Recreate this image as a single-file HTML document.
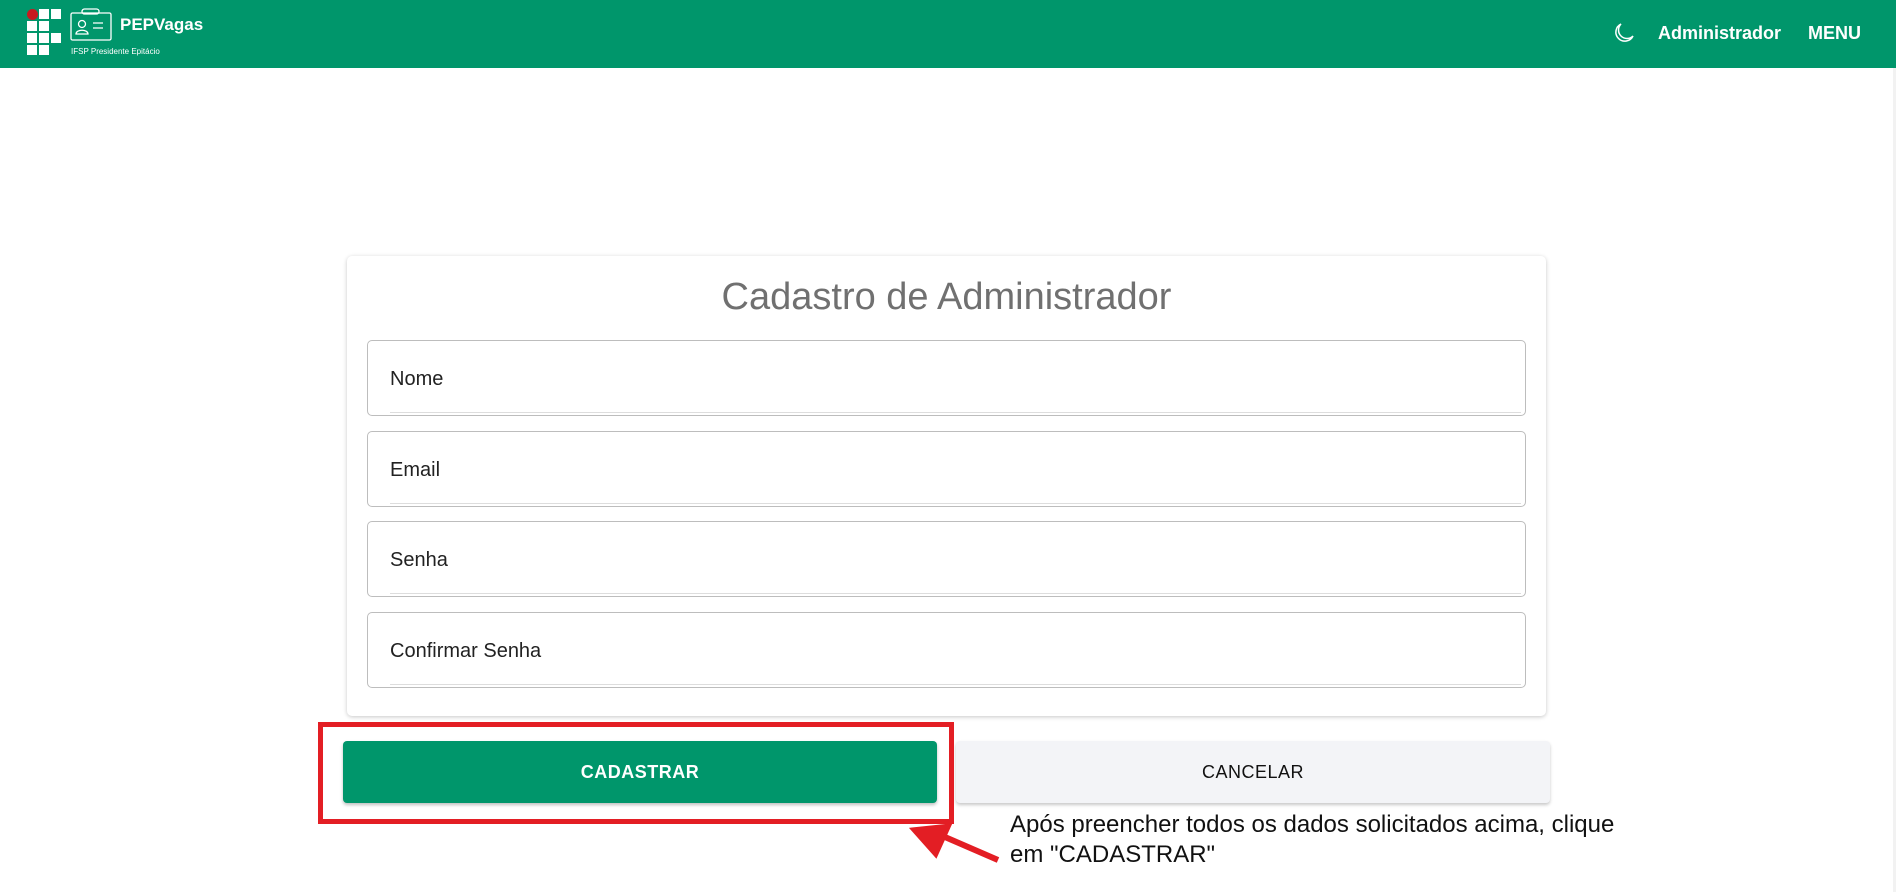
<!DOCTYPE html>
<html><head><meta charset="utf-8"><style>
*{box-sizing:border-box;margin:0;padding:0}
body{width:1896px;height:892px;background:#fff;font-family:"Liberation Sans",sans-serif;position:relative;overflow:hidden}
.hdr{position:absolute;left:0;top:0;width:1896px;height:68px;background:#00966b}
.abs{position:absolute}
.sq{position:absolute;width:10px;height:10px;background:#fff}
.card{position:absolute;left:347px;top:256px;width:1199px;height:460px;background:#fff;border-radius:5px;box-shadow:0 1px 4px rgba(0,0,0,.22)}
.inp{position:absolute;left:20px;width:1159px;height:76px;border:1px solid #bdbdbd;border-radius:5px}
.inp span{position:absolute;left:22px;top:27px;font-size:20px;color:#222}
.inp i{position:absolute;left:22px;right:4px;bottom:2px;border-bottom:1px solid #ddd}
.btn{position:absolute;top:741px;height:62px;border-radius:4px;font-size:18px;font-weight:bold;display:flex;align-items:center;justify-content:center;letter-spacing:.5px}
</style></head><body>
<div class="hdr">
 <div class="sq" style="left:27px;top:9px;border-radius:50%;background:#c8191e;width:11px;height:11px"></div>
 <div class="sq" style="left:39px;top:9px"></div><div class="sq" style="left:51px;top:9px"></div>
 <div class="sq" style="left:27px;top:21px"></div><div class="sq" style="left:39px;top:21px"></div>
 <div class="sq" style="left:27px;top:33px"></div><div class="sq" style="left:39px;top:33px"></div><div class="sq" style="left:51px;top:33px"></div>
 <div class="sq" style="left:27px;top:45px"></div><div class="sq" style="left:39px;top:45px"></div>
 <svg class="abs" style="left:70px;top:8px" width="44" height="34" viewBox="0 0 44 34" fill="none" stroke="#fff" stroke-width="1.3">
  <rect x="1" y="5" width="40" height="27" rx="1.5"/><rect x="12" y="1" width="17" height="5" rx="2.5"/>
  <circle cx="12" cy="16" r="3.5"/><path d="M6 26c0-5 12-5 12 0z"/><path d="M23 15h10M23 20h10"/></svg>
 <div class="abs" style="left:120px;top:15px;color:#fff;font-size:17px;font-weight:bold">PEPVagas</div>
 <div class="abs" style="left:71px;top:47px;color:#fff;font-size:8px">IFSP Presidente Epitácio</div>
 <svg class="abs" style="left:1613px;top:22px" width="22" height="22" viewBox="0 0 22 22" fill="none" stroke="#fff" stroke-width="1.5"><path d="M8 2a9 9 0 1 0 12 12A8 8 0 0 1 8 2z"/></svg>
 <div class="abs" style="left:1658px;top:23px;color:#fff;font-size:18px;font-weight:bold">Administrador</div>
 <div class="abs" style="left:1808px;top:23px;color:#fff;font-size:18px;font-weight:bold;font-weight:600">MENU</div>
</div>
<div class="abs" style="right:0;top:68px;width:3px;height:824px;background:#f2f2f2"></div>
<div class="card">
 <div class="abs" style="left:0;width:1199px;top:20px;text-align:center;font-size:38px;color:#707070">Cadastro de Administrador</div>
 <div class="inp" style="top:84px"><span>Nome</span><i></i></div>
 <div class="inp" style="top:175px"><span>Email</span><i></i></div>
 <div class="inp" style="top:265px"><span>Senha</span><i></i></div>
 <div class="inp" style="top:356px"><span>Confirmar Senha</span><i></i></div>
</div>
<div class="btn" style="left:343px;width:594px;background:#00966b;color:#fff;box-shadow:0 2px 3px rgba(0,0,0,.25)">CADASTRAR</div>
<div class="btn" style="left:956px;width:594px;background:#f3f4f7;color:#111;font-weight:normal;box-shadow:0 2px 3px rgba(0,0,0,.22)">CANCELAR</div>
<div class="abs" style="left:318px;top:722px;width:636px;height:102px;border:5px solid #e31e24"></div>
<svg class="abs" style="left:0;top:0" width="1896" height="892"><path d="M998 860L938 834" stroke="#e31e24" stroke-width="6"/><path d="M912 829L950 825L936 856Z" fill="#e31e24" stroke="#e31e24" stroke-width="3"/></svg>
<div class="abs" style="left:1010px;top:810px;font-size:24px;line-height:30px;color:#111">Após preencher todos os dados solicitados acima, clique<br>em "CADASTRAR"</div>
</body></html>
